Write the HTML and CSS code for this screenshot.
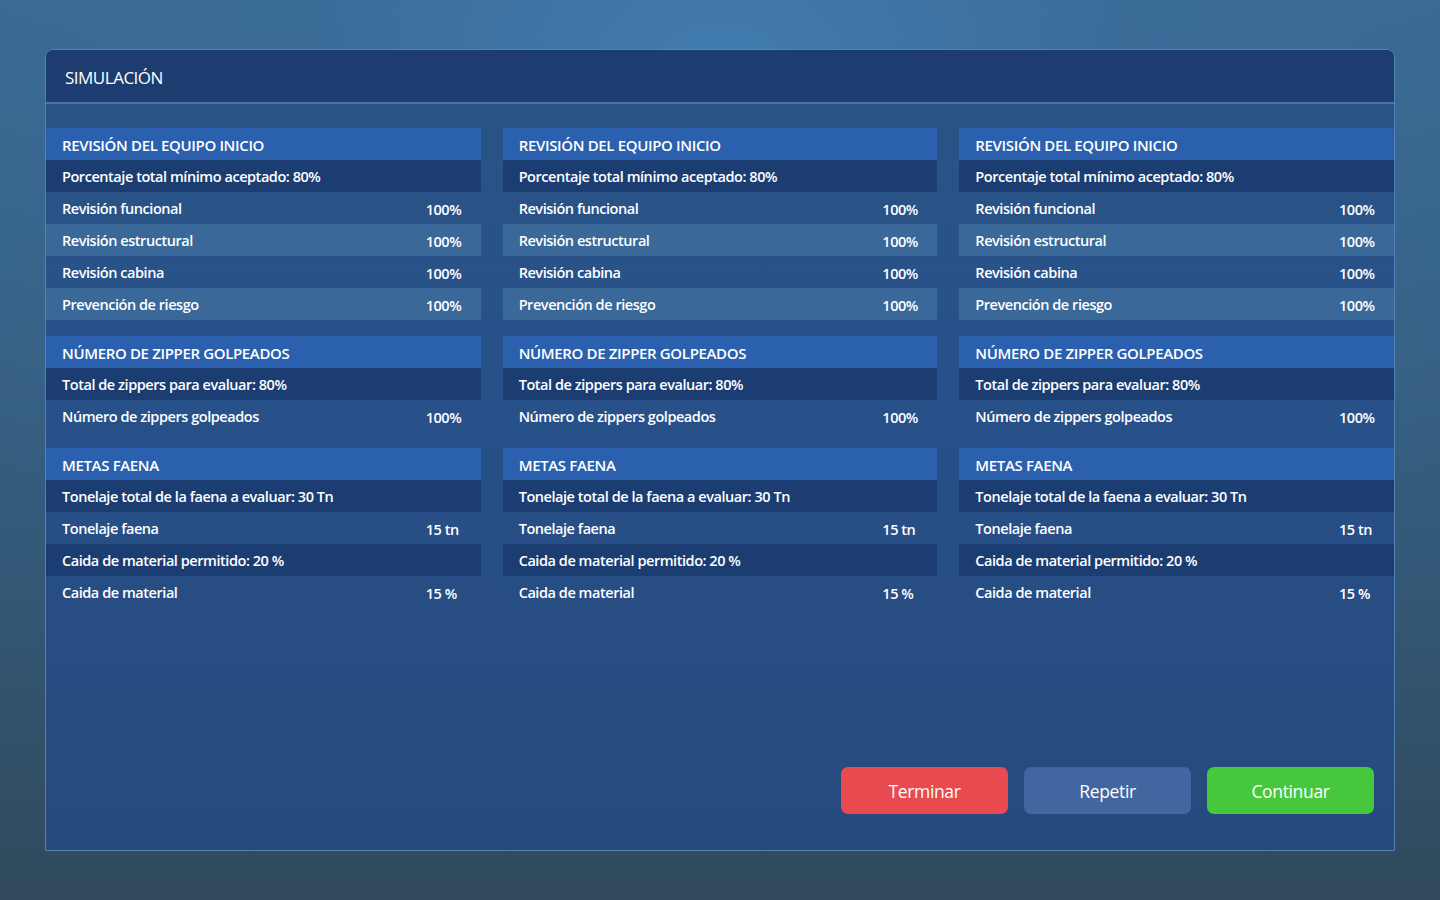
FILE: index.html
```html
<!DOCTYPE html>
<html lang="es">
<head>
<meta charset="utf-8">
<title>Simulación</title>
<link rel="stylesheet" href="styles.css">
</head>
<body>
<div class="stage">
  <section class="panel">
    <header class="panel-head">SIMULACIÓN</header>
    <div class="panel-body">
      <div class="columns">
        <div class="column">
          <div class="block">
            <div class="row head">REVISIÓN DEL EQUIPO INICIO</div>
            <div class="row info">Porcentaje total mínimo aceptado: 80%</div>
            <div class="row data"><span>Revisión funcional</span><span class="val">100%</span></div>
            <div class="row data alt"><span>Revisión estructural</span><span class="val">100%</span></div>
            <div class="row data"><span>Revisión cabina</span><span class="val">100%</span></div>
            <div class="row data alt"><span>Prevención de riesgo</span><span class="val">100%</span></div>
          </div>
          <div class="block">
            <div class="row head">NÚMERO DE ZIPPER GOLPEADOS</div>
            <div class="row info">Total de zippers para evaluar: 80%</div>
            <div class="row data"><span>Número de zippers golpeados</span><span class="val">100%</span></div>
          </div>
          <div class="block">
            <div class="row head">METAS FAENA</div>
            <div class="row info">Tonelaje total de la faena a evaluar: 30 Tn</div>
            <div class="row data"><span>Tonelaje faena</span><span class="val">15 tn</span></div>
            <div class="row info">Caida de material permitido: 20 %</div>
            <div class="row data"><span>Caida de material</span><span class="val">15 %</span></div>
          </div>
        </div>
        <div class="column">
          <div class="block">
            <div class="row head">REVISIÓN DEL EQUIPO INICIO</div>
            <div class="row info">Porcentaje total mínimo aceptado: 80%</div>
            <div class="row data"><span>Revisión funcional</span><span class="val">100%</span></div>
            <div class="row data alt"><span>Revisión estructural</span><span class="val">100%</span></div>
            <div class="row data"><span>Revisión cabina</span><span class="val">100%</span></div>
            <div class="row data alt"><span>Prevención de riesgo</span><span class="val">100%</span></div>
          </div>
          <div class="block">
            <div class="row head">NÚMERO DE ZIPPER GOLPEADOS</div>
            <div class="row info">Total de zippers para evaluar: 80%</div>
            <div class="row data"><span>Número de zippers golpeados</span><span class="val">100%</span></div>
          </div>
          <div class="block">
            <div class="row head">METAS FAENA</div>
            <div class="row info">Tonelaje total de la faena a evaluar: 30 Tn</div>
            <div class="row data"><span>Tonelaje faena</span><span class="val">15 tn</span></div>
            <div class="row info">Caida de material permitido: 20 %</div>
            <div class="row data"><span>Caida de material</span><span class="val">15 %</span></div>
          </div>
        </div>
        <div class="column">
          <div class="block">
            <div class="row head">REVISIÓN DEL EQUIPO INICIO</div>
            <div class="row info">Porcentaje total mínimo aceptado: 80%</div>
            <div class="row data"><span>Revisión funcional</span><span class="val">100%</span></div>
            <div class="row data alt"><span>Revisión estructural</span><span class="val">100%</span></div>
            <div class="row data"><span>Revisión cabina</span><span class="val">100%</span></div>
            <div class="row data alt"><span>Prevención de riesgo</span><span class="val">100%</span></div>
          </div>
          <div class="block">
            <div class="row head">NÚMERO DE ZIPPER GOLPEADOS</div>
            <div class="row info">Total de zippers para evaluar: 80%</div>
            <div class="row data"><span>Número de zippers golpeados</span><span class="val">100%</span></div>
          </div>
          <div class="block">
            <div class="row head">METAS FAENA</div>
            <div class="row info">Tonelaje total de la faena a evaluar: 30 Tn</div>
            <div class="row data"><span>Tonelaje faena</span><span class="val">15 tn</span></div>
            <div class="row info">Caida de material permitido: 20 %</div>
            <div class="row data"><span>Caida de material</span><span class="val">15 %</span></div>
          </div>
        </div>
      </div>
      <div class="actions">
        <button class="btn btn-red">Terminar</button>
        <button class="btn btn-blue">Repetir</button>
        <button class="btn btn-green">Continuar</button>
      </div>
    </div>
  </section>
</div>
</body>
</html>
```
FILE: styles.css
```css
* { box-sizing: border-box; }
html, body { margin: 0; padding: 0; }
body {
  width: 1440px;
  height: 900px;
  overflow: hidden;
  font-family: "Open Sans", "Noto Sans", sans-serif;
  color: #ffffff;
  background:
    radial-gradient(ellipse 900px 650px at 720px 80px, rgba(66,126,178,0.9) 0%, rgba(60,112,160,0.5) 45%, rgba(52,88,118,0) 100%),
    linear-gradient(180deg, #3b6a93 0%, #345a7a 60%, #30495b 100%);
}
.stage {
  padding: 49px 45px 49px 45px;
  height: 900px;
}
.panel {
  height: 802px;
  border: 1px solid #5482b4;
  border-radius: 8px 8px 0 0;
  overflow: hidden;
  display: flex;
  flex-direction: column;
  background: linear-gradient(180deg, #2a5484 0%, #28518a 40%, #264a7c 100%);
}
.panel-head {
  height: 54px;
  flex: none;
  background: #1d3d70;
  border-bottom: 2px solid #4676a8;
  padding: 3px 19px 0;
  display: flex;
  align-items: center;
  font-size: 17px;
  font-weight: 400;
  letter-spacing: -0.5px;
}
.panel-body {
  flex: 1;
  padding-top: 24px;
  display: flex;
  flex-direction: column;
}
.columns {
  display: grid;
  grid-template-columns: repeat(3, 1fr);
  column-gap: 22px;
}
.column {
  display: flex;
  flex-direction: column;
  gap: 16px;
}
.block { display: flex; flex-direction: column; }
.row {
  height: 32px;
  display: flex;
  align-items: center;
  padding-left: 16px;
  font-size: 14.5px;
  font-weight: 600;
  letter-spacing: -0.45px;
}
.row.head {
  background: #2b60ae;
  font-size: 15px;
  font-weight: 600;
  letter-spacing: -0.35px;
  padding-top: 2px;
}
.row.info { background: #1c3d72; }
.row.data { display: grid; grid-template-columns: 1fr 55px; }
.row.data.alt { background: #3a6898; }
.row .val { padding-top: 2px; }
.actions {
  margin-top: auto;
  display: flex;
  justify-content: flex-end;
  gap: 16px;
  padding: 0 20px 36px 0;
}
.btn {
  width: 167px;
  height: 47px;
  border: none;
  border-radius: 7px;
  font-family: "Open Sans", "Noto Sans", sans-serif;
  font-size: 17.5px;
  font-weight: 400;
  letter-spacing: -0.35px;
  color: #ffffff;
  cursor: pointer;
}
.btn-red { background: #e84a4f; }
.btn-blue { background: #4267a0; }
.btn-green { background: #47c83c; }
```
